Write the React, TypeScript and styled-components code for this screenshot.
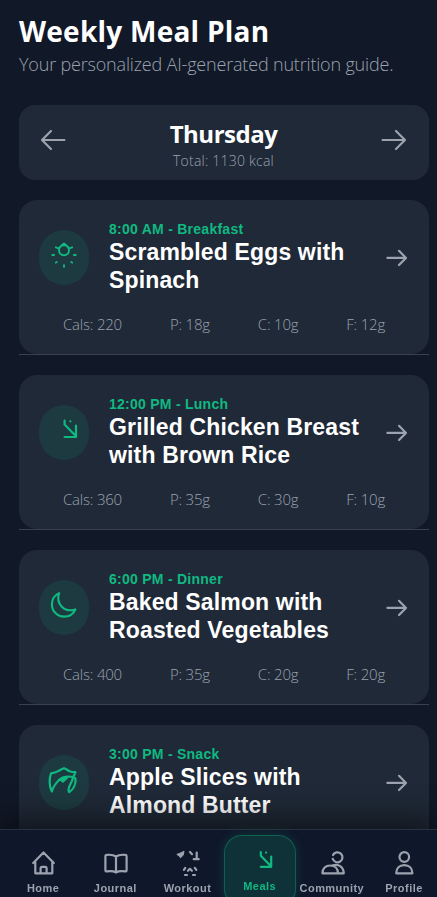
import React, { useState } from 'react';
import styled, { createGlobalStyle } from 'styled-components';

const days = ['Thursday'];

const meals = [
  { icon: 'sun', time: '8:00 AM - Breakfast', name: ['Scrambled Eggs with', 'Spinach'], cals: 220, p: 18, c: 10, f: 12 },
  { icon: 'fork', time: '12:00 PM - Lunch', name: ['Grilled Chicken Breast', 'with Brown Rice'], cals: 360, p: 35, c: 30, f: 10 },
  { icon: 'moon', time: '6:00 PM - Dinner', name: ['Baked Salmon with', 'Roasted Vegetables'], cals: 400, p: 35, c: 20, f: 20 },
  { icon: 'leaf', time: '3:00 PM - Snack', name: ['Apple Slices with', 'Almond Butter'], cals: 150, p: 4, c: 20, f: 8 },
];

const tabs = ['Home', 'Journal', 'Workout', 'Meals', 'Community', 'Profile'];

const mealIcons: { [key: string]: React.ReactNode } = {
  sun: (
    <>
      <circle cx="25" cy="20.2" r="5" strokeWidth="1.9" />
      <path
        strokeWidth="1.9"
        d="M16.9 17.3l2.8 1.2 1.6-1.7M33.1 17.3l-2.8 1.2-1.6-1.7M22.8 15.2l2.2-1.7 2.2 1.7M13.3 25h1.8M34.9 25h1.8M17.7 31.9l-.8.8M32.3 31.9l.8.8M25 35.1v1.6"
      />
    </>
  ),
  fork: <path d="M25.6 15.7v3.8L37 31.3M37 20.7V32H25.6M31.3 16.3h.1" />,
  moon: (
    <g transform="translate(10.2 10.4) scale(.0565)" strokeWidth="38">
      <path d="M160 136c0-30.62 4.51-61.61 16-88C99.57 81.27 48 159.32 48 248c0 119.29 96.71 216 216 216 88.68 0 166.73-51.57 200-128-26.39 11.49-57.38 16-88 16-119.29 0-216-96.71-216-216z" />
    </g>
  ),
  leaf: (
    <>
      <path d="M12.8 36.5C10.4 32 9.8 24 12 18.3c3-.3 5-.9 7.2-2.2 2-1.2 3.8-2.3 5.8-2.9 2 .7 3.5 2.1 5.6 3 1.8.8 3.6 1 5.8 1-.4 1.7-1.2 3.2-2.3 4.8-4.5-.9-10.2-.5-13.4 2.5-3.8 3.4-6.3 7-7.9 12z" />
      <path d="M34.1 22c1.5.5 2.4.9 2.5 2.2.2 5-2.2 10.4-6.3 12.9-1.2-1.2-.6-4.4.6-6.9 1.4-2.8 2.8-5 3.2-8.2z" />
      <path fill="currentColor" strokeWidth="1" d="M19.6 24.8c2.6-2.2 5.6-3 9.6-2.6-1.1 2-3 3.2-5.5 5.4-1-1.5-2.2-2.4-4.1-2.8z" />
    </>
  ),
};

const tabIcons: { [key: string]: React.ReactNode } = {
  Home: <path d="M3.2 13L13.5 2.5 23.8 13M5.3 11.2v12.1h17V11.2M10.6 23.3v-5c0-1 .5-1.5 1.5-1.5h3c1 0 1.5.5 1.5 1.5v5" />,
  Journal: <path d="M14 6.5C11.5 4.8 7.7 4.6 4.7 4.9c-.8 0-1.3.5-1.3 1.3v14c0 .9.5 1.3 1.3 1.2 3-.3 7.3-.2 9.3 1.1 2-1.3 6.3-1.4 9.3-1.1.8.1 1.3-.3 1.3-1.2v-14c0-.8-.5-1.3-1.3-1.3-3-.3-6.8-.1-9.3 1.6zm0 0v16" />,
  Workout: (
    <>
      <path fill="currentColor" strokeWidth="1" d="M3.2 4.3L7 2.8l3-1.6-.8 4-2.8 2.6-1-1.5z" />
      <path d="M16 2l2 2.2M22.7 2.5v6.3M19.7 9.2h5M9.9 19.9l1.4-2M22.3 19.9l-1.5-2M13.9 20.8l2-2 2 2M11 25h2M19 25h2" />
    </>
  ),
  Meals: <path d="M13.8 4v3.7l10.4 10.8M24.2 8.5v10.3H13.8M19 4.6h.1" />,
  Community: (
    <path d="M14 5.1a5 5 0 1 1-.3 3.7M3.4 23.3c0-5 3.3-7.8 7.8-7.8s7.8 2.8 7.8 7.8zM13.7 15.4c5.8-2 10.7 1.2 11.1 7.9H19" />
  ),
  Profile: (
    <>
      <circle cx="13.3" cy="7" r="4.8" />
      <path d="M5.2 23.3c0-5 3.3-8.2 8.1-8.2s8.1 3.2 8.1 8.2z" />
    </>
  ),
};

export default function App() {
  const [day, setDay] = useState(0);
  const [tab, setTab] = useState('Meals');

  const moveDay = (step: number) => {
    setDay((day + step + days.length) % days.length);
  };

  return (
    <Screen>
      <GlobalStyle />
      <Header>
        <PageTitle>Weekly Meal Plan</PageTitle>
        <PageSubtitle>Your personalized AI-generated nutrition guide.</PageSubtitle>
      </Header>
      <DayBar>
        <DayBtn onClick={() => moveDay(-1)}>
          <Icon width="30" height="24" viewBox="0 0 30 24">
            <path d="M13 3l-9 9 9 9M4 12h22.4" />
          </Icon>
        </DayBtn>
        <DayInfo>
          <DayName>{days[day]}</DayName>
          <DayTotal>Total: 1130 kcal</DayTotal>
        </DayInfo>
        <DayBtn onClick={() => moveDay(1)}>
          <Icon width="30" height="24" viewBox="0 0 30 24">
            <path d="M17 3l9 9-9 9M26 12H3.6" />
          </Icon>
        </DayBtn>
      </DayBar>
      <MealList>
        {meals.map(meal => (
          <MealItem key={meal.time}>
            <MealCard>
              <MealTop>
                <MealIcon>
                  <Icon width="50" height="55" viewBox="0 0 50 55">
                    {mealIcons[meal.icon]}
                  </Icon>
                </MealIcon>
                <MealText>
                  <MealTime>{meal.time}</MealTime>
                  {meal.name.map(line => (
                    <MealName key={line}>{line}</MealName>
                  ))}
                </MealText>
                <MealArrow>
                  <Icon width="24" height="20" viewBox="0 0 24 20">
                    <path d="M14 2.8L21 9.9 14 17M21 9.9H2.4" />
                  </Icon>
                </MealArrow>
              </MealTop>
              <Macros>
                <Macro>Cals: {meal.cals}</Macro>
                <Macro>P: {meal.p}g</Macro>
                <Macro>C: {meal.c}g</Macro>
                <Macro>F: {meal.f}g</Macro>
              </Macros>
            </MealCard>
            <MealDivider />
          </MealItem>
        ))}
      </MealList>
      <TabBar>
        {tabs.map(name => (
          <Tab key={name} $active={name === tab} onClick={() => setTab(name)}>
            <Icon width="26" height="27" viewBox="0 0 26 27">
              {tabIcons[name]}
            </Icon>
            <TabLabel>{name}</TabLabel>
          </Tab>
        ))}
      </TabBar>
    </Screen>
  );
}

const GlobalStyle = createGlobalStyle`
  * {
    box-sizing: border-box;
  }
  body {
    margin: 0;
    background: #111827;
  }
`;

const Screen = styled.div`
  height: 897px;
  overflow: hidden;
  padding: 13px 8px 0 19px;
  background: #111827;
  color: #fff;
  font-family: 'Open Sans', 'Noto Sans', sans-serif;
`;

const Icon = styled.svg`
  display: block;
  flex: none;
  fill: none;
  stroke: currentColor;
  stroke-width: 2.2;
  stroke-linecap: round;
  stroke-linejoin: round;
`;

const Header = styled.div`
  height: 92px;
  white-space: nowrap;
`;

const PageTitle = styled.h1`
  margin: 0;
  font-size: 28px;
  line-height: 36px;
  font-weight: 700;
  letter-spacing: 0.25px;
`;

const PageSubtitle = styled.p`
  margin: 0;
  font-size: 18px;
  line-height: 30px;
  font-weight: 300;
  letter-spacing: -0.18px;
  color: #9ca3af;
`;

const DayBar = styled.div`
  height: 75px;
  padding: 0 20px 0 19px;
  display: flex;
  align-items: center;
  justify-content: space-between;
  background: #1f2937;
  border-radius: 16px;
`;

const DayBtn = styled.button`
  padding: 0 0 5px;
  border: 0;
  background: none;
  color: #9ca3af;
`;

const DayInfo = styled.div`
  padding-top: 6px;
  text-align: center;
`;

const DayName = styled.div`
  font-size: 24px;
  line-height: 30px;
  font-weight: 700;
  letter-spacing: -0.5px;
`;

const DayTotal = styled.div`
  font-size: 14px;
  line-height: 23px;
  font-weight: 300;
  letter-spacing: 0.22px;
  color: #9ca3af;
`;

const MealList = styled.div`
  padding-top: 20px;
  display: flex;
  flex-direction: column;
  gap: 20px;
`;

const MealItem = styled.div`
  height: 155px;
`;

const MealCard = styled.div`
  height: 154px;
  padding: 20px;
  background: #1f2937;
  border-radius: 18px;
`;

const MealTop = styled.div`
  height: 75px;
  display: flex;
  align-items: center;
`;

const MealIcon = styled.div`
  width: 50px;
  height: 55px;
  margin-right: 20px;
  border-radius: 25px;
  background: rgba(16, 185, 129, 0.12);
  color: #10b981;
`;

const MealText = styled.div`
  flex: 1;
  padding-bottom: 2px;
  font-family: 'Liberation Sans', Arial, sans-serif;
  font-weight: 700;
  white-space: nowrap;
`;

const MealTime = styled.div`
  font-size: 14px;
  line-height: 18px;
  letter-spacing: 0.26px;
  color: #10b981;
`;

const MealName = styled.div`
  font-size: 23px;
  line-height: 28px;
  letter-spacing: 0.15px;
`;

const MealArrow = styled.div`
  color: #9ca3af;
`;

const Macros = styled.div`
  margin-top: 19px;
  display: flex;
  justify-content: space-around;
`;

const Macro = styled.span`
  font-size: 15px;
  line-height: 20px;
  font-weight: 300;
  letter-spacing: -0.2px;
  color: #9ca3af;
`;

const MealDivider = styled.div`
  height: 1px;
  background: #374151;
`;

const TabBar = styled.nav`
  position: fixed;
  left: 0;
  right: 0;
  bottom: 0;
  height: 68px;
  padding: 5px 0 0 7px;
  display: flex;
  background: #0f172a;
  border-top: 1px solid #293140;
  box-shadow: 0 -10px 30px rgba(0, 0, 0, 0.5);
`;

const Tab = styled.button<{ $active?: boolean }>`
  flex: none;
  width: 72.2px;
  height: 72px;
  padding: ${props => (props.$active ? '12px 0 0' : '14px 0 0')};
  display: flex;
  flex-direction: column;
  align-items: center;
  border: 1px solid ${props => (props.$active ? 'rgba(16, 185, 129, 0.35)' : 'transparent')};
  border-radius: 18px;
  background: ${props => (props.$active ? 'rgba(16, 185, 129, 0.16)' : 'none')};
  box-shadow: ${props => (props.$active ? '0 0 12px rgba(16, 185, 129, 0.2)' : 'none')};
  color: ${props => (props.$active ? '#10b981' : '#9ca3af')};
`;

const TabLabel = styled.span`
  margin-top: 4px;
  font-family: 'Liberation Sans', Arial, sans-serif;
  font-size: 11px;
  line-height: 14px;
  font-weight: 700;
  letter-spacing: 0.45px;
`;
